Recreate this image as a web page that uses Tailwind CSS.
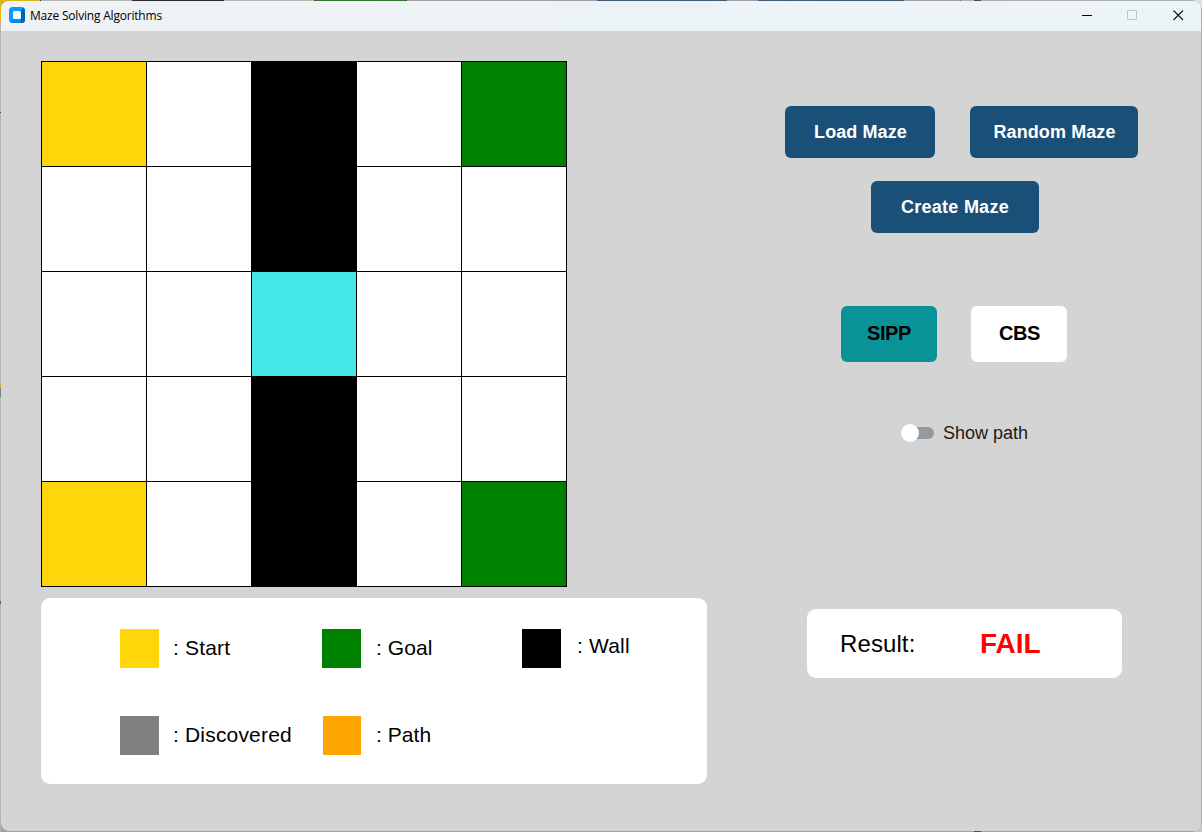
<!DOCTYPE html>
<html lang="en">
<head>
<meta charset="utf-8">
<title>Maze Solving Algorithms</title>
<script src="https://cdn.jsdelivr.net/npm/@tailwindcss/browser@4"></script>
</head>
<body class="w-[1202px] h-[832px] overflow-hidden bg-[#a0a0a0] font-['Liberation_Sans',Arial,sans-serif] text-black">
<div class="relative flex flex-col w-[1202px] h-[832px] pl-px pr-px">
  <!-- desktop showing behind the window edges -->
  <div class="flex h-px -ml-px w-[1202px] shrink-0 bg-[#b0b0b0]">
    <div class="w-10 bg-[#d9b616]"></div><div class="w-px bg-[#333333]"></div><div class="w-[91px] bg-[#b4b4b4]"></div><div class="w-[92px] bg-[#2d2a33]"></div><div class="w-[90px] bg-[#b4b4b4]"></div><div class="w-px bg-[#444444]"></div><div class="w-[91px] bg-[#32732f]"></div><div class="w-px bg-[#333333]"></div><div class="w-[190px] bg-[#a0a0a0]"></div><div class="w-[130px] bg-[#3f5a74]"></div><div class="w-[31px] bg-[#a59fa3]"></div><div class="w-[146px] bg-[#3f5a74]"></div><div class="w-[56px] bg-[#a59fa3]"></div><div class="w-px bg-[#77728a]"></div><div class="w-[13px] bg-[#b0b0b0]"></div><div class="w-[7px] bg-[#4a4a5c]"></div>
  </div>
  <div class="absolute left-0 top-0 w-px h-[21px] bg-[#d9b616]"></div>
  <div class="absolute left-0 top-[21px] w-px h-[811px] bg-[#b4b4b4]"></div>
  <div class="absolute left-0 top-[112px] w-px h-px bg-[#444444]"></div>
  <div class="absolute left-0 top-[384px] w-px h-[3px] bg-[#c9a820]"></div>
  <div class="absolute left-0 top-[388px] w-px h-[9px] bg-[#6e7f90]"></div>
  <div class="absolute left-0 top-[601px] w-px h-[3px] bg-[#666666]"></div>
  <div class="absolute left-0 top-0 size-2 bg-[#d9b616]"></div>
  <div class="absolute right-0 top-0 size-2 bg-[#dedede]"></div>
  <div class="absolute right-0 bottom-0 size-2 bg-[#c6c6c6]"></div>
  <div class="absolute right-0 top-2 w-px h-[816px] bg-[#b0b0b0]"></div>
  <div class="absolute left-[974px] bottom-0 w-[7px] h-px bg-[#4a4a5c]"></div>

  <main class="relative flex flex-col w-[1200px] h-[830px] rounded-lg overflow-hidden bg-[#d4d4d4]">
    <header class="flex items-center h-[30px] shrink-0 bg-linear-to-r from-[#f0f2f4] via-[#ecf3f6] to-[#ebf4f7] pl-2">
      <svg class="size-4 -mt-0.5" viewBox="0 0 16 16">
        <rect width="16" height="16" rx="3.500" fill="#0a9bff"/>
        <path d="M12 3.500 14.500.8A3.500 3.500 0 0 1 16 3.500v9a3.500 3.500 0 0 1-3.500 3.500H12l-.5-3.500z" fill="#0560b0"/>
        <path d="M3.500 12.500h8.500V16H4a3.500 3.500 0 0 1-2.500-1z" fill="#078ae8"/>
        <rect x="4" y="4" width="8" height="8" rx="1.500" fill="#f6fbff"/>
      </svg>
      <h1 class="ml-[5px] text-[12px] leading-4 font-['Open_Sans','Noto_Sans',sans-serif] tracking-[-0.2px]">Maze Solving Algorithms</h1>
      <div class="ml-auto mr-[17px] flex items-center -mt-0.5">
        <svg class="w-[10px] h-3 mr-[35px]" viewBox="0 0 10 12"><path d="M0 6.500h10" stroke="#000"/></svg>
        <svg class="w-[10px] h-3 mr-9" viewBox="0 0 10 12"><rect x=".5" y="1.500" width="9" height="9" rx=".5" fill="none" stroke="#bfc4c8"/></svg>
        <svg class="w-[11px] h-3" viewBox="0 0 11 12"><path d="m.5 1.500 9.500 9.500m0-9.500L.5 11" stroke="#111" stroke-width="1.100"/></svg>
      </div>
    </header>

    <div class="flex pl-10 pt-[30px]">
      <section class="flex flex-col w-[666px]">
        <div class="grid grid-cols-5 grid-rows-5 gap-px p-px size-[526px] bg-black">
          <div class="bg-[#ffd60a]"></div><div class="bg-white"></div><div class="bg-black"></div><div class="bg-white"></div><div class="bg-[#008000]"></div>
          <div class="bg-white"></div><div class="bg-white"></div><div class="bg-black"></div><div class="bg-white"></div><div class="bg-white"></div>
          <div class="bg-white"></div><div class="bg-white"></div><div class="bg-[#43e8e6]"></div><div class="bg-white"></div><div class="bg-white"></div>
          <div class="bg-white"></div><div class="bg-white"></div><div class="bg-black"></div><div class="bg-white"></div><div class="bg-white"></div>
          <div class="bg-[#ffd60a]"></div><div class="bg-white"></div><div class="bg-black"></div><div class="bg-white"></div><div class="bg-[#008000]"></div>
        </div>
        <div class="mt-[11px] h-[186px] rounded-[9px] bg-white pl-[79px] pt-[31px] grid grid-cols-[202px_200px_1fr] grid-rows-[39px_39px] gap-y-12 text-[21px] leading-[38px] tracking-[0.18px]">
          <div class="flex"><i class="size-[39px] bg-[#ffd60a]"></i><span class="ml-[14px]">: Start</span></div>
          <div class="flex"><i class="size-[39px] bg-[#008000]"></i><span class="ml-[15px] tracking-[0.08px]">: Goal</span></div>
          <div class="flex"><i class="size-[39px] bg-black"></i><span class="ml-4 -mt-0.5">: Wall</span></div>
          <div class="flex"><i class="size-[39px] bg-[#808080]"></i><span class="ml-[14px]">: Discovered</span></div>
          <div class="flex"><i class="ml-px w-[38px] h-[39px] bg-[#ffa500]"></i><span class="ml-[15px] tracking-[0.04px]">: Path</span></div>
        </div>
      </section>

      <section class="flex flex-col w-[494px] pt-[45px]">
        <div class="flex gap-[35px] pl-[78px] text-[18px] font-bold text-white tracking-[0.1px]">
          <button class="w-[150px] h-[52px] rounded-md bg-[#1a4f78] pl-px">Load Maze</button>
          <button class="w-[168px] h-[52px] rounded-md bg-[#1a4f78] pl-px">Random Maze</button>
        </div>
        <button class="mt-[23px] ml-[164px] w-[168px] h-[52px] rounded-md bg-[#1a4f78] text-[18px] font-bold text-white tracking-[0.25px]">Create Maze</button>
        <div class="flex gap-[34px] mt-[73px] pl-[134px] text-[20px] font-bold tracking-[-0.4px]">
          <button class="w-24 h-14 rounded-md bg-[#0a9396] pb-0.5">SIPP</button>
          <button class="w-24 h-14 rounded-md bg-white pb-0.5 pl-px">CBS</button>
        </div>
        <label class="flex items-center h-6 mt-[59px] ml-[194px]">
          <span class="flex items-center w-[33px] h-[18px]"><span class="size-[18px] rounded-full bg-white z-10"></span><span class="w-6 h-3 -ml-[9px] rounded-full bg-[#939ba2]"></span></span>
          <span class="ml-[9px] text-[18px] leading-6 text-[#1a1a1a]">Show path</span>
        </label>
        <div class="flex items-center mt-[164px] ml-[100px] w-[315px] h-[69px] rounded-[9px] bg-white pl-[33px]">
          <span class="w-[140px] text-[24px] tracking-[0.1px]">Result:</span>
          <span class="text-[28px] font-bold text-[#ff0000]">FAIL</span>
        </div>
      </section>
    </div>
  </main>
</div>
</body>
</html>
